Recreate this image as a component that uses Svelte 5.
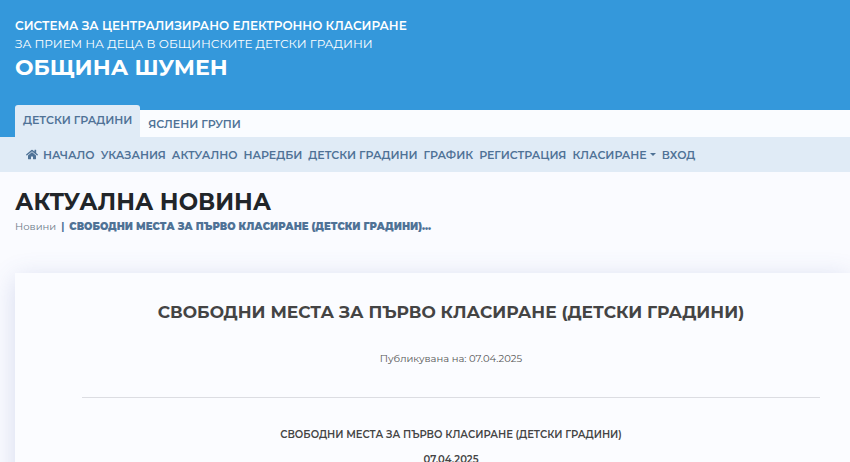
<script lang="ts">
    const tabs = ["ДЕТСКИ ГРАДИНИ", "ЯСЛЕНИ ГРУПИ"];
    let activeTab = $state(0);

    const title = "СВОБОДНИ МЕСТА ЗА ПЪРВО КЛАСИРАНЕ (ДЕТСКИ ГРАДИНИ)";
    const date = "07.04.2025";

    const menu = [
        { label: "НАЧАЛО", icon: true },
        { label: "УКАЗАНИЯ" },
        { label: "АКТУАЛНО" },
        { label: "НАРЕДБИ" },
        { label: "ДЕТСКИ ГРАДИНИ" },
        { label: "ГРАФИК" },
        { label: "РЕГИСТРАЦИЯ" },
        { label: "КЛАСИРАНЕ", dropdown: true },
        { label: "ВХОД" },
    ];
</script>

<div class="page">
    <header>
        <div class="brand">
            <p class="system">СИСТЕМА ЗА ЦЕНТРАЛИЗИРАНО ЕЛЕКТРОННО КЛАСИРАНЕ</p>
            <p class="purpose">ЗА ПРИЕМ НА ДЕЦА В ОБЩИНСКИТЕ ДЕТСКИ ГРАДИНИ</p>
            <p class="city">ОБЩИНА ШУМЕН</p>
        </div>
        <div class="tabs">
            {#each tabs as tab, i}
                <button class="tab" class:active={activeTab === i} onclick={() => (activeTab = i)}>{tab}</button>
            {/each}
            <div class="strip"></div>
        </div>
    </header>

    <nav>
        {#each menu as item}
            {#if item.dropdown}
                <button class="item" aria-haspopup="true">{item.label}<span class="caret"></span></button>
            {:else}
                <a class="item" href="#top">
                    {#if item.icon}
                        <svg class="home" viewBox="0 0 576 512" aria-hidden="true">
                            <path d="M280.4 148.3 96 300.1V464a16 16 0 0 0 16 16l112-.3a16 16 0 0 0 16-16V368a16 16 0 0 1 16-16h64a16 16 0 0 1 16 16v95.6a16 16 0 0 0 16 16.1l112 .3a16 16 0 0 0 16-16V300L295.7 148.3a12.2 12.2 0 0 0-15.3 0zM571.6 251.5 488 182.6V44a12 12 0 0 0-12-12h-56a12 12 0 0 0-12 12v72.6L318.5 43a48 48 0 0 0-61 0L4.3 251.5a12 12 0 0 0-1.6 16.9l25.5 31a12 12 0 0 0 16.9 1.6l235.3-193.8a12.2 12.2 0 0 1 15.3 0L530.9 301a12 12 0 0 0 16.9-1.6l25.5-31a12 12 0 0 0-1.7-16.9z" />
                        </svg>
                    {/if}
                    {item.label}
                </a>
            {/if}
        {/each}
    </nav>

    <main>
        <h1>АКТУАЛНА НОВИНА</h1>
        <div class="breadcrumb">
            <a href="#news">Новини</a>
            <span class="divider">|</span>
            <strong>{title}...</strong>
        </div>

        <article>
            <h2>{title}</h2>
            <p class="published">Публикувана на: {date}</p>
            <hr />
            <p class="lead">{title}</p>
            <p class="lead">{date}</p>
        </article>
    </main>
</div>

<style>
    :global(body) {
        margin: 0;
        background: #fafbff;
    }

    .page {
        height: 100vh;
        overflow: hidden;
        font-family: Montserrat, Inter, sans-serif;
        font-size: 11px;
        line-height: 18px;
        color: #444;
    }

    p,
    h1,
    h2 {
        margin: 0;
    }

    a {
        color: inherit;
        text-decoration: none;
    }

    button {
        border: 0;
        padding: 0;
        background: none;
        font: inherit;
        color: inherit;
        cursor: pointer;
    }

    header {
        background: #3498db;
        color: #fff;
    }

    .brand {
        padding: 17px 15px 22px;
        font-size: 12px;
    }

    .system {
        font-weight: 600;
    }

    .city {
        font-size: 22px;
        font-weight: 700;
        line-height: 30px;
    }

    .tabs {
        display: flex;
        align-items: flex-end;
        padding-left: 15px;
        color: #4f7296;
    }

    .tab {
        height: 27px;
        padding: 0 8px;
        background: #fafcff;
        font-weight: 600;
        white-space: nowrap;
    }

    .tab.active {
        height: 32px;
        padding-bottom: 3px;
        border-radius: 3px 3px 0 0;
        background: #e0ebf6;
    }

    .strip {
        flex: 1;
        height: 27px;
        background: #fafcff;
    }

    nav {
        display: flex;
        align-items: center;
        gap: 6px;
        height: 35px;
        padding: 0 26px;
        background: #e0ebf6;
        color: #4f7296;
        font-weight: 600;
        white-space: nowrap;
    }

    .item {
        display: flex;
        align-items: center;
    }

    .home {
        width: 12px;
        height: 11px;
        margin-right: 5px;
        fill: currentColor;
    }

    .caret {
        margin-left: 3px;
        border: 3px solid transparent;
        border-top-color: currentColor;
        border-bottom: 0;
    }

    main {
        padding: 14px 0 0 15px;
    }

    h1 {
        font-size: 23px;
        font-weight: 700;
        line-height: 32px;
        color: #212529;
    }

    .breadcrumb {
        display: flex;
        gap: 5px;
        font-size: 10px;
        font-weight: 700;
        color: #4f7296;
    }

    .breadcrumb a {
        font-weight: 400;
        color: #6b7a88;
    }

    article {
        min-height: 240px;
        margin-top: 37px;
        padding: 24px 30px 0 67px;
        background: #fbfcff;
        box-shadow: 0 5px 25px rgba(70, 90, 170, 0.2);
        text-align: center;
    }

    h2 {
        font-size: 17px;
        font-weight: 700;
        line-height: 30px;
    }

    .published {
        margin-top: 23px;
        font-size: 10px;
        color: #555;
    }

    hr {
        margin: 29px 0 28px;
        border: 0;
        border-top: 1px solid #dcdde2;
    }

    .lead {
        margin-bottom: 7px;
        font-size: 10px;
        font-weight: 600;
    }
</style>
